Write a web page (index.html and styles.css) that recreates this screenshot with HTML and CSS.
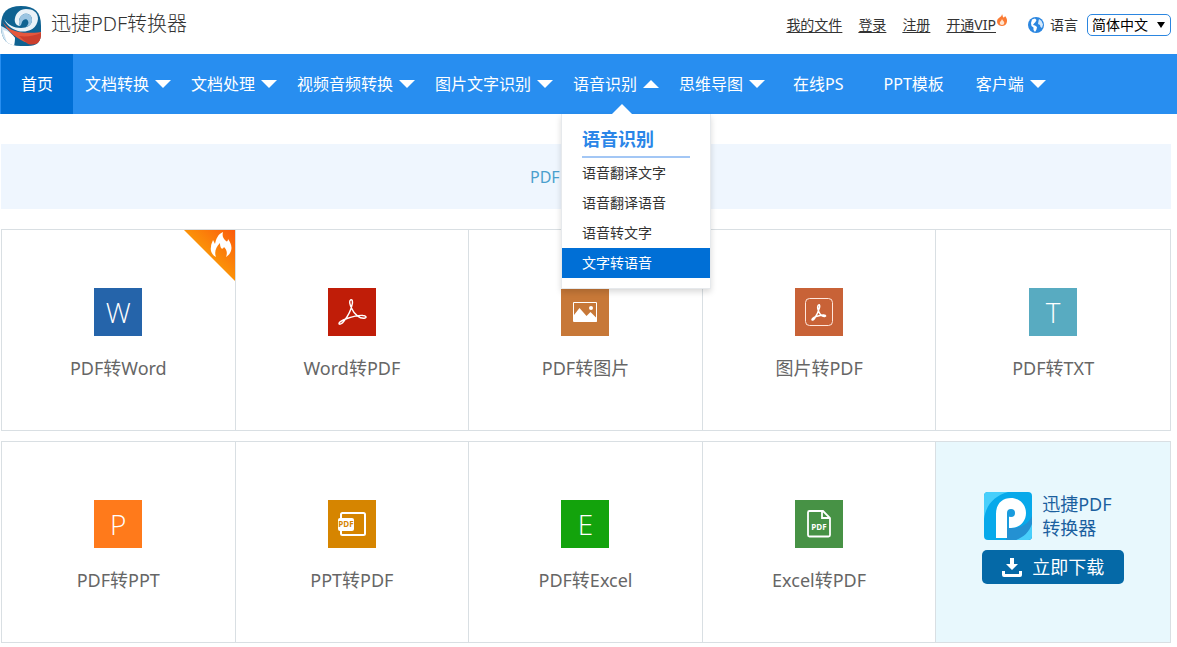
FILE: index.html
```html
<!DOCTYPE html>
<html lang="zh-CN">
<head>
<meta charset="utf-8">
<meta name="viewport" content="width=device-width, initial-scale=1">
<title>迅捷PDF转换器</title>
<link rel="stylesheet" href="styles.css">
</head>
<body>
<header class="topbar">
  <a class="brand" href="#">
    <svg class="brand-logo" viewBox="0 0 40 40" aria-hidden="true">
      <defs><clipPath id="logo-clip"><path d="M20 0C34 0 40 6 40 20v7c0 9-4 13-13 13h-7C6 40 0 34 0 20S6 0 20 0z"/></clipPath></defs>
      <g clip-path="url(#logo-clip)">
        <rect width="40" height="40" fill="#0f6291"/>
        <path d="M0 20c6 2 11 8 14 12l-1 8H0z" fill="#cfe3f1"/>
        <path d="M2 24c5 1 9 4 12 8l-1 8H7z" fill="#fff"/>
        <path d="M1 15c6 9 16 14 39 11v8c-4 4-9 4-13 3C17 34 7 26 1 15z" fill="#e4573d"/>
        <path d="M18 30c7 1 15 0 22-3v8c-4 4-9 4-13 3z" fill="#cb3f2d"/>
        <path d="M3 13C5 18 10 23 17 25c8 2 19-1 20-12C37 6 32 3 25 3c-6 0-10 4-11 9-1 4 1 8 5 8-2-4-1-10 4-12 5-1 8 2 8 6 0 5-5 8-11 8C13 22 7 19 3 13z" fill="#eaf2f8"/>
        <path d="M19 20c-2-4-1-10 4-12 5-1 8 2 8 6 0 4-3 6-6 7 2-2 3-4 2-6-1-3-5-2-6 1-.5 2-1 3-2 4z" fill="#9cc5e2"/>
      </g>
    </svg>
    <span>迅捷PDF转换器</span>
  </a>
  <div class="account">
    <a href="#">我的文件</a>
    <a href="#">登录</a>
    <a href="#">注册</a>
    <a class="vip" href="#">开通VIP<svg class="vip-flame" viewBox="0 0 10 12" aria-hidden="true"><path d="M5 0c1 2 .5 3 1.500 3.500C7.500 3.500 7.800 2.500 8 2c2 2 2.500 4.500 1.600 7C9 11 7.200 12 5 12S1 11 .3 9C-.5 6 1 4.500 2.500 3.500 4 2.500 5 1.500 5 0z" fill="#fa7a33"/><path d="M5 5c.4 1.800 2.300 2 2.300 4A2.200 2.200 0 0 1 5 11a2.200 2.200 0 0 1-2.300-2C2.700 7.500 4.600 7 5 5z" fill="#ffe3cd"/></svg></a>
    <div class="language">
      <svg class="globe" viewBox="0 0 16 16" aria-hidden="true"><circle cx="8" cy="8" r="8" fill="#2b86e0"/><path d="M4 2.500l3-1L8.500 3 7.500 5 6 6.500 5 8l2 .5 2 1.500-.5 2.500L7 15 5.500 13V10.500L3.500 9 3 6z" fill="#fff"/><path d="M11 2l2.500 2L15 7.500l-1 3.500-1.500-1L12 8l-2-1 .5-3z" fill="#d4e8fb"/></svg>
      <label for="lang">语言</label>
      <span class="select-box">
        <select id="lang"><option>简体中文</option></select>
      </span>
    </div>
  </div>
</header>

<nav class="mainnav" aria-label="主导航">
  <ul class="menu">
    <li class="menu-item plain current"><a href="#">首页</a></li>
    <li class="menu-item"><a class="drop" href="#">文档转换</a></li>
    <li class="menu-item"><a class="drop" href="#">文档处理</a></li>
    <li class="menu-item"><a class="drop" href="#">视频音频转换</a></li>
    <li class="menu-item"><a class="drop" href="#">图片文字识别</a></li>
    <li class="menu-item open"><a class="drop" href="#">语音识别</a>
      <div class="submenu">
        <h2 class="submenu-title">语音识别</h2>
        <ul class="submenu-list">
          <li><a href="#">语音翻译文字</a></li>
          <li><a href="#">语音翻译语音</a></li>
          <li><a href="#">语音转文字</a></li>
          <li><a class="active" href="#">文字转语音</a></li>
        </ul>
      </div>
    </li>
    <li class="menu-item"><a class="drop" href="#">思维导图</a></li>
    <li class="menu-item plain"><a href="#">在线PS</a></li>
    <li class="menu-item plain"><a href="#">PPT模板</a></li>
    <li class="menu-item"><a class="drop" href="#">客户端</a></li>
  </ul>
</nav>

<main class="content">
  <div class="banner"><span class="banner-text">PDF</span></div>

  <div class="tools">
    <a class="tool" href="#">
      <svg class="hot" viewBox="0 0 51 51" aria-hidden="true">
        <defs><linearGradient id="hot-fill" x1="1" y1="0" x2=".4" y2=".6"><stop offset="0" stop-color="#fb5a0c"/><stop offset="1" stop-color="#fb9d08"/></linearGradient></defs>
        <path d="M0 0h51v51z" fill="url(#hot-fill)"/>
        <path d="M39 2c-1 4 0 6 3 9 1 1 2 0 2-2 3 4 5 9 2 14-1 2-3 3-4 4 2-5 0-8-2-10-1 2-2 2-3 1-1-2-1-4-1-5-4 4-6 9-4 14-4-2-6-6-5-10 0-3 1-4 2-7l2 4c1-5 3-10 8-12z" fill="#fff"/>
      </svg>
      <span class="tile blue">W</span>
      <span class="tool-name">PDF转Word</span>
    </a>
    <a class="tool" href="#">
      <span class="tile red"><svg viewBox="0 0 48 48" aria-hidden="true"><g fill="none" stroke="#fff" stroke-width="1.400"><path d="M22.500 12c2-1 2.500 2 1.500 5-1 5-4 11-8 16-2 3-5 4-5 2.500s4-3.500 8-5c6-2 12-3.500 16-3 3 .3 4 2 2 2.500-5 1.200-11-4-13-9-2-4-3-8-1.500-9z"/></g></svg></span>
      <span class="tool-name">Word转PDF</span>
    </a>
    <a class="tool" href="#">
      <span class="tile brown"><svg viewBox="0 0 48 48" aria-hidden="true"><path d="M12.500 14.500h23v19h-23z" fill="none" stroke="#fff"/><path d="M13 27l5.500-7 7 8 4-4 6 6v4H13z" fill="#fff"/><circle cx="30" cy="20" r="2" fill="#fff"/></svg></span>
      <span class="tool-name">PDF转图片</span>
    </a>
    <a class="tool" href="#">
      <span class="tile rust"><svg viewBox="0 0 48 48" aria-hidden="true"><g fill="none" stroke="#fff"><rect x="10.500" y="10.500" width="27" height="27" rx="4" stroke="#ffe6dc"/><path d="M23.500 17c1-.8 1.500.5 1 2.500-1 4-3 8-5 11-1 1.500-2.500 2-2.500 1s2-2 4-3c3-1 6-2 8-1.500 2 .3 2 1.300.5 1.500-3 .3-5-3-6-5.500s-1-5 0-6z" stroke-width="1.500"/></g></svg></span>
      <span class="tool-name">图片转PDF</span>
    </a>
    <a class="tool" href="#">
      <span class="tile teal">T</span>
      <span class="tool-name">PDF转TXT</span>
    </a>
  </div>

  <div class="tools">
    <a class="tool" href="#">
      <span class="tile orange">P</span>
      <span class="tool-name">PDF转PPT</span>
    </a>
    <a class="tool" href="#">
      <span class="tile amber"><svg viewBox="0 0 48 48" aria-hidden="true"><rect x="13" y="13" width="24" height="22" rx="1.500" fill="none" stroke="#fff" stroke-width="2"/><rect x="10" y="18" width="16" height="13" rx="2" fill="#fff"/><text class="badge amber-text" x="18" y="27" text-anchor="middle">PDF</text></svg></span>
      <span class="tool-name">PPT转PDF</span>
    </a>
    <a class="tool" href="#">
      <span class="tile green">E</span>
      <span class="tool-name">PDF转Excel</span>
    </a>
    <a class="tool" href="#">
      <span class="tile moss"><svg viewBox="0 0 48 48" aria-hidden="true"><path d="M14.500 11H28l7 7v17a1.500 1.500 0 0 1-1.500 1.500h-19A1.500 1.500 0 0 1 13 35V12.500A1.500 1.500 0 0 1 14.500 11zM27 11v7h8" fill="none" stroke="#fff" stroke-width="1.800"/><text class="badge white-text" x="24" y="30" text-anchor="middle">PDF</text></svg></span>
      <span class="tool-name">Excel转PDF</span>
    </a>
    <div class="promo">
      <div class="promo-head">
        <svg class="promo-logo" viewBox="0 0 48 48" aria-hidden="true">
          <defs><clipPath id="app-clip"><rect width="48" height="48" rx="4"/></clipPath></defs>
          <g clip-path="url(#app-clip)">
            <rect width="48" height="48" fill="#08a9ea"/>
            <path d="M0 0h24C10 4 2 13 0 27z" fill="#48cffb"/>
            <path d="M48 24v24H22V36h8c9-1 15-5 18-12z" fill="#2491d2"/>
            <path d="M32 48c8-3 13-8 16-16v16z" fill="#48cffb"/>
            <path d="M12 46V22C12 12 18 6 27 6c8 0 15 6 15 15s-7 15-15 15h-4v10z" fill="#fff"/>
            <circle cx="27" cy="21" r="4" fill="#1a9bdd"/>
            <path d="M23 21h2v15h-2z" fill="#1a9bdd"/>
          </g>
        </svg>
        <span class="promo-name">迅捷PDF<br>转换器</span>
      </div>
      <button class="download" type="button">
        <svg class="download-icon" viewBox="0 0 20 20" aria-hidden="true"><path d="M8 1h4v6h4l-6 6-6-6h4z" fill="#fff"/><path d="M0 14h3v3h14v-3h3v4a2 2 0 0 1-2 2H2a2 2 0 0 1-2-2z" fill="#fff"/></svg>
        立即下载
      </button>
    </div>
  </div>
</main>
</body>
</html>
```
FILE: styles.css
```css
* {
  box-sizing: border-box;
}

body {
  margin: 0;
  background: #fff;
  color: #333;
  font-family: "Noto Sans", "Noto Sans CJK SC", sans-serif;
  font-size: 14px;
  line-height: 20px;
}

a {
  color: inherit;
  text-decoration: none;
}

ul {
  margin: 0;
  padding: 0;
  list-style: none;
}

/* Header */
.topbar {
  display: flex;
  align-items: center;
  justify-content: space-between;
  height: 54px;
  padding: 0 6px 2px 1px;
}

.brand {
  display: flex;
  align-items: center;
  gap: 10px;
  font-size: 20px;
  line-height: 28px;
  font-weight: 300;
}

.brand span {
  padding-bottom: 4px;
}

.brand-logo {
  width: 40px;
  height: 40px;
}

.account {
  display: flex;
  align-items: center;
  gap: 16px;
  padding-bottom: 2px;
}

.account > a {
  text-decoration: underline;
  text-underline-offset: 2px;
}

.account > .vip {
  display: flex;
  align-items: flex-start;
  gap: 1px;
}

.vip-flame {
  width: 10px;
  height: 12px;
  margin-top: -1px;
}

.language {
  display: flex;
  align-items: center;
  gap: 6px;
  padding-left: 5px;
}

.globe {
  width: 16px;
  height: 16px;
}

.select-box {
  position: relative;
  display: flex;
  margin-left: 3px;
}

.select-box::after {
  content: "";
  position: absolute;
  top: 8px;
  right: 6px;
  border: 4px solid transparent;
  border-top: 6px solid #000;
  border-bottom: 0;
  pointer-events: none;
}

.select-box select {
  appearance: none;
  width: 84px;
  height: 22px;
  padding: 0 4px;
  border: 1px solid #2b86e0;
  border-radius: 5px;
  background: #fff;
  color: #000;
  font: inherit;
}

/* Navigation */
.mainnav {
  background: #288ef0;
  color: #fff;
  font-size: 16px;
}

.menu {
  display: flex;
  padding-left: 1px;
}

.menu-item {
  position: relative;
  padding: 0 8px 0 12px;
  line-height: 60px;
  white-space: nowrap;
}

.menu-item.plain {
  padding: 0 20px;
}

.menu-item.current {
  background: #006fd6;
}

.menu-item > a {
  display: flex;
  align-items: center;
  gap: 6px;
}

.drop::after {
  content: "";
  border: 8px solid transparent;
  border-top-color: #fff;
  border-bottom: 0;
}

.open .drop::after {
  border-top: 0;
  border-bottom: 8px solid #fff;
}

.submenu {
  position: absolute;
  top: 100%;
  left: 0;
  z-index: 2;
  width: 150px;
  padding: 10px 0;
  border: 1px solid #e6e9ec;
  border-top: 0;
  background: #fff;
  box-shadow: 0 3px 6px rgba(0, 0, 0, 0.15);
  color: #333;
  font-size: 14px;
  line-height: 30px;
}

.submenu::before {
  content: "";
  position: absolute;
  bottom: 100%;
  left: 50px;
  border: 10px solid transparent;
  border-top: 0;
  border-bottom-color: #fff;
}

.submenu-title {
  margin: 0 20px;
  padding-bottom: 2px;
  border-bottom: 2px solid #a3c7f5;
  color: #2b86e8;
  font-size: 18px;
  line-height: 30px;
}

.submenu-list a {
  display: block;
  padding: 0 20px;
}

.submenu-list .active {
  background: #006fd6;
  color: #fff;
}

/* Content */
.content {
  display: grid;
  gap: 10px;
  padding: 30px 6px 4px 1px;
}

.banner {
  display: flex;
  align-items: center;
  justify-content: center;
  height: 65px;
  margin-bottom: 10px;
  background: #eff6fe;
  color: #4a9fcd;
  font-size: 16px;
}

.banner-text {
  width: 112px;
}

.tools {
  display: grid;
  grid-template-columns: repeat(5, 1fr);
  min-height: 202px;
  border: 1px solid #d9dfe3;
}

.tool,
.promo {
  position: relative;
  display: flex;
  flex-direction: column;
  align-items: center;
  border-right: 1px solid #d9dfe3;
}

.tools > :last-child {
  border-right: 0;
}

.tool {
  gap: 20px;
  padding-top: 58px;
}

.tool-name {
  color: #666;
  font-size: 18px;
  line-height: 24px;
}

.hot {
  position: absolute;
  top: 0;
  right: 0;
  width: 51px;
  height: 51px;
}

.tile {
  display: flex;
  align-items: center;
  justify-content: center;
  width: 48px;
  height: 48px;
  color: #fff;
  font-family: "Open Sans", sans-serif;
  font-size: 28px;
  font-weight: 350;
}

.tile svg {
  width: 48px;
  height: 48px;
}

.blue { background: #2564aa; }
.red { background: #c01d08; }
.brown { background: #c77838; }
.rust { background: #c86237; }
.teal { background: #58abc1; }
.orange { background: #ff7a1b; }
.amber { background: #d68500; }
.green { background: #13a30c; }
.moss { background: #479245; }

.badge {
  font-size: 8px;
  font-weight: 700;
}

.amber-text {
  fill: #d68500;
}

.white-text {
  fill: #fff;
}

.promo {
  gap: 10px;
  padding-top: 50px;
  background: #e8f8fd;
}

.promo-head {
  display: flex;
  gap: 10px;
  width: 138px;
}

.promo-logo {
  width: 48px;
  height: 48px;
}

.promo-name {
  color: #1b609f;
  font-size: 18px;
  line-height: 24px;
  white-space: nowrap;
}

.download {
  display: flex;
  align-items: center;
  justify-content: center;
  gap: 10px;
  width: 142px;
  height: 34px;
  padding: 0;
  border: 0;
  border-radius: 5px;
  background: #0569a7;
  color: #fff;
  font: inherit;
  font-size: 18px;
}

.download-icon {
  width: 20px;
  height: 20px;
}
```
